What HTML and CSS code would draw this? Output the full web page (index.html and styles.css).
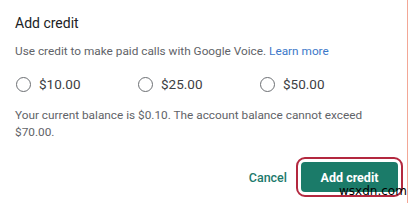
FILE: index.html
```html
<!DOCTYPE html>
<html lang="en">
<head>
    <meta charset="UTF-8">
    <meta name="viewport" content="width=device-width, initial-scale=1.0">
    <title>Add credit</title>
    <link rel="stylesheet" href="styles.css">
</head>
<body>
    <div class="dialog">
        <h2 class="dialog-title">Add credit</h2>
        <p class="dialog-text">Use credit to make paid calls with Google Voice. <a href="#" class="link">Learn more</a></p>

        <div class="amounts">
            <label class="amount">
                <span class="radio"></span>
                <span class="amount-label">$10.00</span>
            </label>
            <label class="amount">
                <span class="radio"></span>
                <span class="amount-label">$25.00</span>
            </label>
            <label class="amount">
                <span class="radio"></span>
                <span class="amount-label">$50.00</span>
            </label>
        </div>

        <p class="dialog-text balance">Your current balance is $0.10. The account balance cannot exceed $70.00.</p>

        <div class="actions">
            <button type="button" class="btn-text">Cancel</button>
            <button type="button" class="btn-primary">Add credit</button>
        </div>

        <span class="watermark">wsxdn.com</span>
    </div>
</body>
</html>
```

FILE: styles.css
```css
* {
    box-sizing: border-box;
    margin: 0;
    padding: 0;
}

body {
    background: #fff;
    font-family: Roboto, Arial, sans-serif;
    width: 411px;
    height: 203px;
    overflow: hidden;
}

.dialog {
    position: relative;
    width: 408px;
    height: 203px;
    border-right: 1px solid #f3a796;
    padding: 13px 0 0 15px;
}

.dialog-title {
    font-size: 14px;
    font-weight: 400;
    line-height: 20px;
    color: #202124;
}

.dialog-text {
    margin-top: 10px;
    font-size: 11.8px;
    line-height: 16px;
    color: #5f6368;
    width: 350px;
}

.link {
    color: #3b78c9;
    text-decoration: none;
}

.amounts {
    display: flex;
    margin-top: 15px;
}

.amount {
    display: flex;
    align-items: center;
    width: 122px;
    height: 20px;
    padding-left: 1px;
}

.radio {
    width: 15px;
    height: 15px;
    border: 1.6px solid #6c6f73;
    border-radius: 50%;
}

.amount-label {
    margin-left: 8px;
    font-size: 13.5px;
    color: #3c4043;
}

.balance {
    margin-top: 13px;
    line-height: 17px;
}

.actions {
    display: flex;
    justify-content: flex-end;
    align-items: center;
    gap: 14px;
    margin-top: 21px;
    padding-right: 9px;
}

.btn-text {
    background: none;
    border: none;
    font-family: Roboto, Arial, sans-serif;
    font-size: 12.5px;
    font-weight: 500;
    color: #1e7a6c;
    padding: 6px 0;
}

.btn-primary {
    width: 97px;
    height: 30px;
    background: #1b7b69;
    color: #fff;
    border: none;
    border-radius: 4px;
    font-family: Roboto, Arial, sans-serif;
    font-size: 12.5px;
    font-weight: 700;
    outline: 2px solid #b3283f;
    outline-offset: 3px;
}

.watermark {
    position: absolute;
    left: 339px;
    top: 184px;
    font-family: "DejaVu Sans", sans-serif;
    font-size: 12px;
    color: #000;
}
```
